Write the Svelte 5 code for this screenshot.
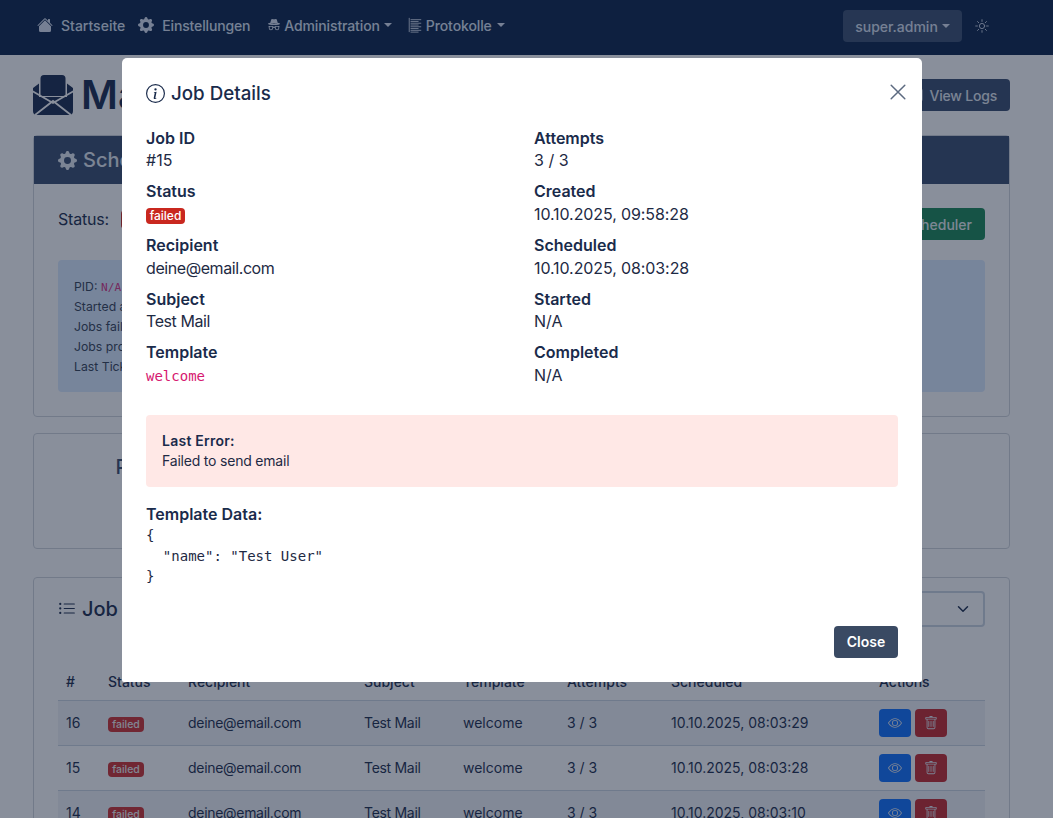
<script>
  const navLinks = [
    { label: 'Startseite', icon: 'house' },
    { label: 'Einstellungen', icon: 'gear' },
    { label: 'Administration', icon: 'incognito', caret: true },
    { label: 'Protokolle', icon: 'logs', caret: true }
  ];

  const stats = ['Pending', 'Processing', 'Sent', 'Failed', 'Total'];

  const rows = [
    { id: 16, scheduled: '10.10.2025, 08:03:29' },
    { id: 15, scheduled: '10.10.2025, 08:03:28' },
    { id: 14, scheduled: '10.10.2025, 08:03:10' }
  ];

  const logLines = [3, 5, 7, 9, 11, 13, 15, 17];

  const gear = 'M9.405 1.05c-.413-1.4-2.397-1.4-2.81 0l-.1.34a1.464 1.464 0 0 1-2.105.872l-.31-.17c-1.283-.698-2.686.705-1.987 1.987l.169.311c.446.82.023 1.841-.872 2.105l-.34.1c-1.4.413-1.4 2.397 0 2.81l.34.1a1.464 1.464 0 0 1 .872 2.105l-.17.31c-.698 1.283.705 2.686 1.987 1.987l.311-.169a1.464 1.464 0 0 1 2.105.872l.1.34c.413 1.4 2.397 1.4 2.81 0l.1-.34a1.464 1.464 0 0 1 2.105-.872l.31.17c1.283.698 2.686-.705 1.987-1.987l-.169-.311a1.464 1.464 0 0 1 .872-2.105l.34-.1c1.4-.413 1.4-2.397 0-2.81l-.34-.1a1.464 1.464 0 0 1-.872-2.105l.17-.31c.698-1.283-.705-2.686-1.987-1.987l-.311.169a1.464 1.464 0 0 1-2.105-.872l-.1-.34zM8 10.93a2.929 2.929 0 1 1 0-5.86 2.929 2.929 0 0 1 0 5.858z';
</script>

{#snippet gearIcon(size)}
  <svg class="icon" width={size} height={size} viewBox="0 0 16 16" fill="currentColor"><path d={gear}/></svg>
{/snippet}

<nav class="navbar">
  <div class="nav-links">
    {#each navLinks as link}
      <a class="nav-link {link.icon}" href="#top">
        {#if link.icon === 'house'}
          <svg class="icon" width="16" height="16" viewBox="0 0 16 16" fill="currentColor">
            <path d="M8.707 1.5a1 1 0 0 0-1.414 0L.646 8.146a.5.5 0 0 0 .708.708L8 2.207l6.646 6.647a.5.5 0 0 0 .708-.708L13 5.793V2.5a.5.5 0 0 0-.5-.5h-1a.5.5 0 0 0-.5.5v1.293L8.707 1.5Z"/>
            <path d="m8 3.293 6 6V13.5a1.5 1.5 0 0 1-1.5 1.5h-9A1.5 1.5 0 0 1 2 13.5V9.293l6-6Z"/>
          </svg>
        {:else if link.icon === 'gear'}
          {@render gearIcon(16)}
        {:else if link.icon === 'incognito'}
          <svg class="icon" width="14" height="14" viewBox="0 0 16 16" fill="currentColor">
            <path fill-rule="evenodd" d="m4.736 1.968-.892 3.269-.014.058C2.113 5.568 1 6.006 1 6.5 1 7.328 4.134 8 8 8s7-.672 7-1.5c0-.494-1.113-.932-2.83-1.205a1.032 1.032 0 0 0-.014-.058l-.892-3.27c-.146-.533-.698-.849-1.239-.734C9.411 1.363 8.62 1.5 8 1.5c-.62 0-1.411-.136-2.025-.267-.541-.115-1.093.2-1.239.735Zm.015 3.867a.25.25 0 0 1 .274-.224c.9.092 1.91.143 2.975.143a29.58 29.58 0 0 0 2.975-.143.25.25 0 0 1 .05.498c-.918.093-1.944.145-3.025.145s-2.107-.052-3.025-.145a.25.25 0 0 1-.224-.274ZM3.5 10h2a.5.5 0 0 1 .5.5v1a1.5 1.5 0 0 1-3 0v-1a.5.5 0 0 1 .5-.5Zm-1.5.5c0-.175.03-.344.085-.5H2a.5.5 0 0 1 0-1h3.5a1.5 1.5 0 0 1 1.436 1.06C7.33 9.897 7.73 9.8 8 9.8c.27 0 .67.097 1.064.26A1.5 1.5 0 0 1 10.5 9H14a.5.5 0 0 1 0 1h-.085c.055.156.085.325.085.5v1a2.5 2.5 0 0 1-5 0v-.14l-.21-.07a2.5 2.5 0 0 0-1.58 0l-.21.07v.14a2.5 2.5 0 0 1-5 0v-1Zm8.5-.5h2a.5.5 0 0 1 .5.5v1a1.5 1.5 0 0 1-3 0v-1a.5.5 0 0 1 .5-.5Z"/>
          </svg>
        {:else}
          <svg class="icon" width="14" height="16" viewBox="0 0 14 18" fill="none" stroke="currentColor">
            <path d="M0.5 1V17"/>
            {#each logLines as y, i}
              <path d="M2 {y}H{i % 2 ? 11 : 14}"/>
            {/each}
          </svg>
        {/if}
        <span>{link.label}</span>
        {#if link.caret}<i class="caret"></i>{/if}
      </a>
    {/each}
  </div>
  <div class="nav-user">
    <button class="user-btn">super.admin<i class="caret"></i></button>
    <svg class="sun" width="14" height="14" viewBox="0 0 16 16" fill="none" stroke="currentColor" stroke-linecap="round">
      <circle cx="8" cy="8" r="3"/>
      <path d="M8 .8v2M8 13.2v2M.8 8h2M13.2 8h2M2.9 2.9l1.4 1.4M11.7 11.7l1.4 1.4M2.9 13.1l1.4-1.4M11.7 4.3l1.4-1.4"/>
    </svg>
  </div>
</nav>

<main class="page">
  <header class="page-head">
    <h1>
      <svg class="mail-icon" width="40" height="40" viewBox="0 0 40 40">
        <path class="mail-fill" d="M11 0h18a3.5 3.5 0 0 1 3.5 3.500V21H7.500V3.500A3.500 3.500 0 0 1 11 0z"/>
        <path class="mail-fill" d="M6 8.500L0 13v23a4 4 0 0 0 4 4h32a4 4 0 0 0 4-4V13l-6-4.500V22H6z"/>
        <path class="mail-cut" d="M-1 16L20 28 41 16M2 40L20 26 38 40"/>
      </svg>
      Mail Queue
    </h1>
    <button class="btn btn-slate">
      <svg class="icon" width="14" height="14" viewBox="0 0 16 16" fill="none" stroke="currentColor"><rect x="1" y="1" width="14" height="14" rx="1.500"/></svg>
      View Logs
    </button>
  </header>

  <section class="card scheduler">
    <h2 class="card-bar">{@render gearIcon(19)}Scheduler</h2>
    <div class="card-body">
      <div class="status-row">
        <div class="status">Status: <span class="badge stopped">Stopped</span></div>
        <button class="btn btn-green">Start Scheduler</button>
      </div>
      <div class="info">
        <div>PID: <code>N/A</code></div>
        <div>Started at: N/A</div>
        <div>Jobs failed: 0</div>
        <div>Jobs processed: 0</div>
        <div>Last Tick: N/A</div>
      </div>
    </div>
  </section>

  <section class="card stats">
    {#each stats as stat}
      <div class="stat">{stat}</div>
    {/each}
  </section>

  <section class="card jobs">
    <div class="jobs-head">
      <h2>
        <svg class="icon" width="18" height="18" viewBox="0 0 16 16" fill="currentColor">
          <path fill-rule="evenodd" d="M5 11.500a.5.5 0 0 1 .5-.5h9a.5.5 0 0 1 0 1h-9a.5.5 0 0 1-.5-.5zm0-4a.5.5 0 0 1 .5-.5h9a.5.5 0 0 1 0 1h-9a.5.5 0 0 1-.5-.5zm0-4a.5.5 0 0 1 .5-.5h9a.5.5 0 0 1 0 1h-9a.5.5 0 0 1-.5-.5zm-3 1a1 1 0 1 0 0-2 1 1 0 0 0 0 2zm0 4a1 1 0 1 0 0-2 1 1 0 0 0 0 2zm0 4a1 1 0 1 0 0-2 1 1 0 0 0 0 2z"/>
        </svg>
        Job Queue
      </h2>
      <div class="select">
        All
        <svg width="12" height="12" viewBox="0 0 16 16" fill="none" stroke="currentColor" stroke-width="2" stroke-linecap="round" stroke-linejoin="round"><path d="m2 5 6 6 6-6"/></svg>
      </div>
    </div>
    <table>
      <thead>
        <tr>
          <th class="c-id">#</th>
          <th class="c-status">Status</th>
          <th class="c-recipient">Recipient</th>
          <th class="c-subject">Subject</th>
          <th class="c-template">Template</th>
          <th class="c-attempts">Attempts</th>
          <th class="c-scheduled">Scheduled</th>
          <th>Actions</th>
        </tr>
      </thead>
      <tbody>
        {#each rows as row}
          <tr>
            <td>{row.id}</td>
            <td><span class="badge failed">failed</span></td>
            <td class="tight">deine@email.com</td>
            <td class="tight">Test Mail</td>
            <td>welcome</td>
            <td>3 / 3</td>
            <td>{row.scheduled}</td>
            <td class="actions">
              <button class="act view" aria-label="View">
                <svg width="14" height="14" viewBox="0 0 16 16" fill="currentColor">
                  <path d="M16 8s-3-5.500-8-5.500S0 8 0 8s3 5.500 8 5.500S16 8 16 8zM1.173 8a13.133 13.133 0 0 1 1.660-2.043C4.120 4.668 5.880 3.500 8 3.500c2.120 0 3.879 1.168 5.168 2.457A13.133 13.133 0 0 1 14.828 8c-.058.087-.122.183-.195.288-.335.480-.830 1.120-1.465 1.755C11.879 11.332 10.119 12.500 8 12.500c-2.120 0-3.879-1.168-5.168-2.457A13.134 13.134 0 0 1 1.172 8z"/>
                  <path d="M8 5.500a2.500 2.500 0 1 0 0 5 2.500 2.500 0 0 0 0-5zM4.500 8a3.500 3.500 0 1 1 7 0 3.500 3.500 0 0 1-7 0z"/>
                </svg>
              </button>
              <button class="act del" aria-label="Delete">
                <svg width="14" height="14" viewBox="0 0 16 16" fill="currentColor">
                  <path d="M5.500 5.500A.5.5 0 0 1 6 6v6a.5.5 0 0 1-1 0V6a.5.5 0 0 1 .5-.5zm2.500 0a.5.5 0 0 1 .5.5v6a.5.5 0 0 1-1 0V6a.5.5 0 0 1 .5-.5zm3 .5a.5.5 0 0 0-1 0v6a.5.5 0 0 0 1 0V6z"/>
                  <path fill-rule="evenodd" d="M14.500 3a1 1 0 0 1-1 1H13v9a2 2 0 0 1-2 2H5a2 2 0 0 1-2-2V4h-.5a1 1 0 0 1-1-1V2a1 1 0 0 1 1-1H6a1 1 0 0 1 1-1h2a1 1 0 0 1 1 1h3.500a1 1 0 0 1 1 1v1zM4.118 4 4 4.059V13a1 1 0 0 0 1 1h6a1 1 0 0 0 1-1V4.059L11.882 4H4.118zM2.500 3V2h11v1h-11z"/>
                </svg>
              </button>
            </td>
          </tr>
        {/each}
      </tbody>
    </table>
  </section>
</main>

<div class="backdrop">
  <div class="modal">
    <div class="modal-head">
      <h3>
        <svg class="icon" width="19" height="19" viewBox="0 0 16 16" fill="currentColor">
          <path d="M8 15A7 7 0 1 1 8 1a7 7 0 0 1 0 14zm0 1A8 8 0 1 0 8 0a8 8 0 0 0 0 16z"/>
          <path d="m8.930 6.588-2.290.287-.082.380.450.083c.294.070.352.176.288.469l-.738 3.468c-.194.897.105 1.319.808 1.319.545 0 1.178-.252 1.465-.598l.088-.416c-.2.176-.492.246-.686.246-.275 0-.375-.193-.304-.533L8.930 6.588zM9 4.500a1 1 0 1 1-2 0 1 1 0 0 1 2 0z"/>
        </svg>
        Job Details
      </h3>
      <button class="close" aria-label="Close">
        <svg width="16" height="16" viewBox="0 0 16 16" fill="none" stroke="currentColor" stroke-width="1.500" stroke-linecap="round"><path d="M1.200 1.200l13.600 13.600M14.800 1.200L1.200 14.800"/></svg>
      </button>
    </div>
    <div class="details">
      <div class="detail-col">
        <div class="item"><strong>Job ID</strong><span>#15</span></div>
        <div class="item"><strong>Status</strong><span><span class="badge modal-badge">failed</span></span></div>
        <div class="item"><strong>Recipient</strong><span class="tight">deine@email.com</span></div>
        <div class="item"><strong>Subject</strong><span class="tight">Test Mail</span></div>
        <div class="item"><strong>Template</strong><span><code class="tpl">welcome</code></span></div>
      </div>
      <div class="detail-col">
        <div class="item"><strong>Attempts</strong><span>3 / 3</span></div>
        <div class="item"><strong>Created</strong><span class="date">10.10.2025, 09:58:28</span></div>
        <div class="item"><strong>Scheduled</strong><span class="date">10.10.2025, 08:03:28</span></div>
        <div class="item"><strong>Started</strong><span>N/A</span></div>
        <div class="item"><strong>Completed</strong><span>N/A</span></div>
      </div>
    </div>
    <div class="error">
      <strong>Last Error:</strong>
      <div>Failed to send email</div>
    </div>
    <strong class="data-label">Template Data:</strong>
    <pre>{`{
  "name": "Test User"
}`}</pre>
    <div class="modal-foot">
      <button class="btn close-btn">Close</button>
    </div>
  </div>
</div>

<style>
  :global(body) {
    margin: 0;
    height: 818px;
    overflow: hidden;
    background: #fff;
    color: #1a2b4b;
    font-family: Inter, "Noto Sans", sans-serif;
    font-size: 16px;
  }

  .icon { flex: none; }
  button { font-family: inherit; border: 0; }

  /* Navbar */
  .navbar {
    height: 55px;
    padding: 0 64px 3px 37px;
    box-sizing: border-box;
    display: flex;
    align-items: center;
    justify-content: space-between;
    background: #082048;
    color: #d8e0f0;
    font-size: 14px;
    font-weight: 500;
  }
  .nav-links { display: flex; align-items: center; margin-bottom: 2px; }
  .nav-link {
    display: flex;
    align-items: center;
    color: inherit;
    text-decoration: none;
    white-space: nowrap;
  }
  .nav-link.house { gap: 8px; margin-right: 13px; }
  .nav-link.gear { gap: 8px; margin-right: 17px; letter-spacing: -0.15px; }
  .nav-link.incognito { gap: 3px; margin-right: 16px; letter-spacing: -0.12px; }
  .nav-link.logs { gap: 4px; letter-spacing: -0.1px; }
  .caret {
    display: inline-block;
    border-top: 4px solid;
    border-left: 4px solid transparent;
    border-right: 4px solid transparent;
  }
  .nav-link .caret { margin-left: 1px; }
  .nav-user { display: flex; align-items: center; gap: 13px; }
  .user-btn {
    height: 32px;
    width: 119px;
    border-radius: 4px;
    background: #384c6e;
    color: inherit;
    font-size: 14px;
    font-weight: 500;
    display: flex;
    align-items: center;
    justify-content: center;
    gap: 4px;
  }
  .sun { flex: none; }

  /* Page */
  .page { margin: 0 43px 0 33px; padding-top: 16px; }
  .page-head {
    display: flex;
    align-items: center;
    justify-content: space-between;
    margin-bottom: 16px;
  }
  h1 {
    margin: 0;
    display: flex;
    align-items: center;
    gap: 8px;
    height: 48px;
    font-size: 40px;
    line-height: 48px;
    font-weight: 600;
    color: #16284c;
  }
  .mail-fill { fill: #16284c; }
  .mail-cut { fill: none; stroke: #fff; stroke-width: 1.800; }

  .btn {
    height: 32px;
    padding: 0 13px;
    border-radius: 4px;
    font-size: 14px;
    font-weight: 600;
    color: #fff;
  }
  .btn-slate {
    display: flex;
    align-items: center;
    gap: 6px;
    font-weight: 500;
    letter-spacing: -0.2px;
    background: #364a6c;
    color: #e2e8f0;
  }
  .btn-green { font-weight: 500; background: #198754; color: #e6eef0; }

  .card {
    border: 1px solid #d1d5db;
    border-radius: 4px;
    box-sizing: border-box;
  }
  .scheduler { margin-bottom: 16px; height: 282px; }
  .card-bar {
    margin: 0;
    height: 48px;
    padding: 0 24px;
    display: flex;
    align-items: center;
    gap: 6px;
    background: #364a6c;
    color: #e2e8f0;
    font-size: 20px;
    font-weight: 500;
  }
  .card-body { padding: 24px 24px; }
  .status-row {
    display: flex;
    align-items: flex-start;
    justify-content: space-between;
    margin-bottom: 20px;
  }
  .status {
    display: flex;
    align-items: center;
    gap: 12px;
    height: 22px;
    letter-spacing: -0.2px;
  }
  .info {
    padding: 17px 16px 15px;
    height: 100px;
    border-radius: 4px;
    background: #dbeafe;
    color: #334155;
    font-size: 12.250px;
    line-height: 20px;
  }
  .info code {
    font-family: "DejaVu Sans Mono", monospace;
    font-size: 11.200px;
    line-height: 1;
    color: #d63384;
  }

  .stats {
    height: 116px;
    margin-bottom: 28px;
    padding: 21px 24px;
    display: grid;
    grid-template-columns: repeat(5, 1fr);
  }
  .stat { text-align: center; padding-left: 8px; font-size: 20px; font-weight: 500; color: #364a6c; }

  .jobs { padding: 13px 24px 0; }
  .jobs-head {
    display: flex;
    align-items: center;
    justify-content: space-between;
    margin-bottom: 36px;
  }
  .jobs-head h2 {
    margin: 0;
    display: flex;
    align-items: center;
    gap: 6px;
    font-size: 20px;
    font-weight: 500;
  }
  .select {
    width: 200px;
    height: 36px;
    box-sizing: border-box;
    padding: 0 14px;
    display: flex;
    align-items: center;
    justify-content: space-between;
    border: 2px solid #cbd5e1;
    border-radius: 4px;
    font-size: 14px;
  }

  table {
    width: 100%;
    table-layout: fixed;
    border-collapse: collapse;
    font-size: 14px;
    line-height: 21px;
  }
  th {
    padding: 8px;
    text-align: left;
    font-weight: 500;
    border-bottom: 1px solid #cbd5e1;
    box-sizing: border-box;
  }
  .c-id { width: 42px; }
  .c-status { width: 80px; }
  .c-recipient { width: 176px; }
  .c-subject { width: 99px; }
  .c-template { width: 104px; }
  .c-attempts { width: 104px; }
  .c-scheduled { width: 208px; }
  td {
    padding: 7px 8px 9px;
    border-bottom: 1px solid #cbd5e1;
    color: #1a2b4b;
  }
  td.tight { letter-spacing: -0.3px; }
  tbody tr:nth-child(odd) td { background: #f1f3f6; }
  td.actions { padding: 8px; }
  .act {
    width: 32px;
    height: 28px;
    padding: 0;
    border-radius: 4px;
    vertical-align: top;
    display: inline-flex;
    align-items: center;
    justify-content: center;
    color: #e2e8f0;
  }
  .view { background: #0d6efd; }
  .del { background: #c5262a; }

  .badge {
    display: inline-block;
    border-radius: 4px;
    color: #fff;
    font-weight: 500;
  }
  .failed {
    width: 36px;
    height: 15px;
    line-height: 15px;
    text-align: center;
    font-size: 10.500px;
    background: #cf2e2e;
    vertical-align: 0;
    color: #ededed;
  }
  .stopped { padding: 2px 8px; font-size: 12px; background: #c9281f; }

  /* Modal */
  .backdrop {
    position: fixed;
    inset: 0;
    display: flex;
    justify-content: center;
    align-items: flex-start;
    padding: 58px 9px 0 0;
    background: rgba(20, 32, 56, 0.5);
  }
  .modal {
    width: 800px;
    box-sizing: border-box;
    padding: 24px;
    background: #fff;
    border-radius: 5px 5px 2px 2px;
    display: flex;
    flex-direction: column;
    color: #1e2a44;
  }
  .modal-head {
    display: flex;
    align-items: center;
    justify-content: space-between;
    height: 24px;
    margin-bottom: 20.600px;
  }
  h3 {
    margin: -1px 0 0;
    display: flex;
    align-items: center;
    gap: 6px;
    font-size: 18.750px;
    line-height: 24px;
    font-weight: 500;
    color: #1a2b4b;
  }
  .close {
    padding: 0;
    margin: -4px -8px 0 0;
    background: none;
    color: #5c6a80;
    display: flex;
  }
  .details {
    display: grid;
    grid-template-columns: 1fr 1fr;
    column-gap: 24px;
    margin-bottom: 26.900px;
  }
  .item {
    display: flex;
    flex-direction: column;
    align-items: flex-start;
    margin-bottom: 8.200px;
  }
  .item strong { line-height: 22.200px; }
  .item > span { line-height: 22.800px; margin-top: 0.500px; }
  .item > .tight { letter-spacing: -0.42px; }
  .item > .date { letter-spacing: -0.1px; }
  .item:last-child { margin-bottom: 0; }
  strong { font-weight: 600; color: #1a2b4b; }
  .modal-badge {
    height: 16px;
    width: 39px;
    text-align: center;
    line-height: 16px;
    font-size: 12px;
    background: #c9281f;
  }
  .tpl {
    font-family: "DejaVu Sans Mono", monospace;
    font-size: 14px;
    color: #d6186f;
  }
  .error {
    height: 72px;
    box-sizing: border-box;
    padding: 16px 16px 15px;
    border-radius: 4px;
    background: #ffe8e6;
    font-size: 14px;
    line-height: 20.500px;
    margin-bottom: 16px;
  }
  .error strong { letter-spacing: 0.25px; }
  .error div { letter-spacing: -0.2px; }
  .data-label { line-height: 22.500px; }
  pre {
    margin: 0 0 39px;
    font-family: "DejaVu Sans Mono", monospace;
    font-size: 14px;
    line-height: 20.500px;
    color: #1e2a44;
  }
  .modal-foot { display: flex; justify-content: flex-end; }
  .close-btn { width: 64px; padding: 0; background: #3a4a63; }
</style>
